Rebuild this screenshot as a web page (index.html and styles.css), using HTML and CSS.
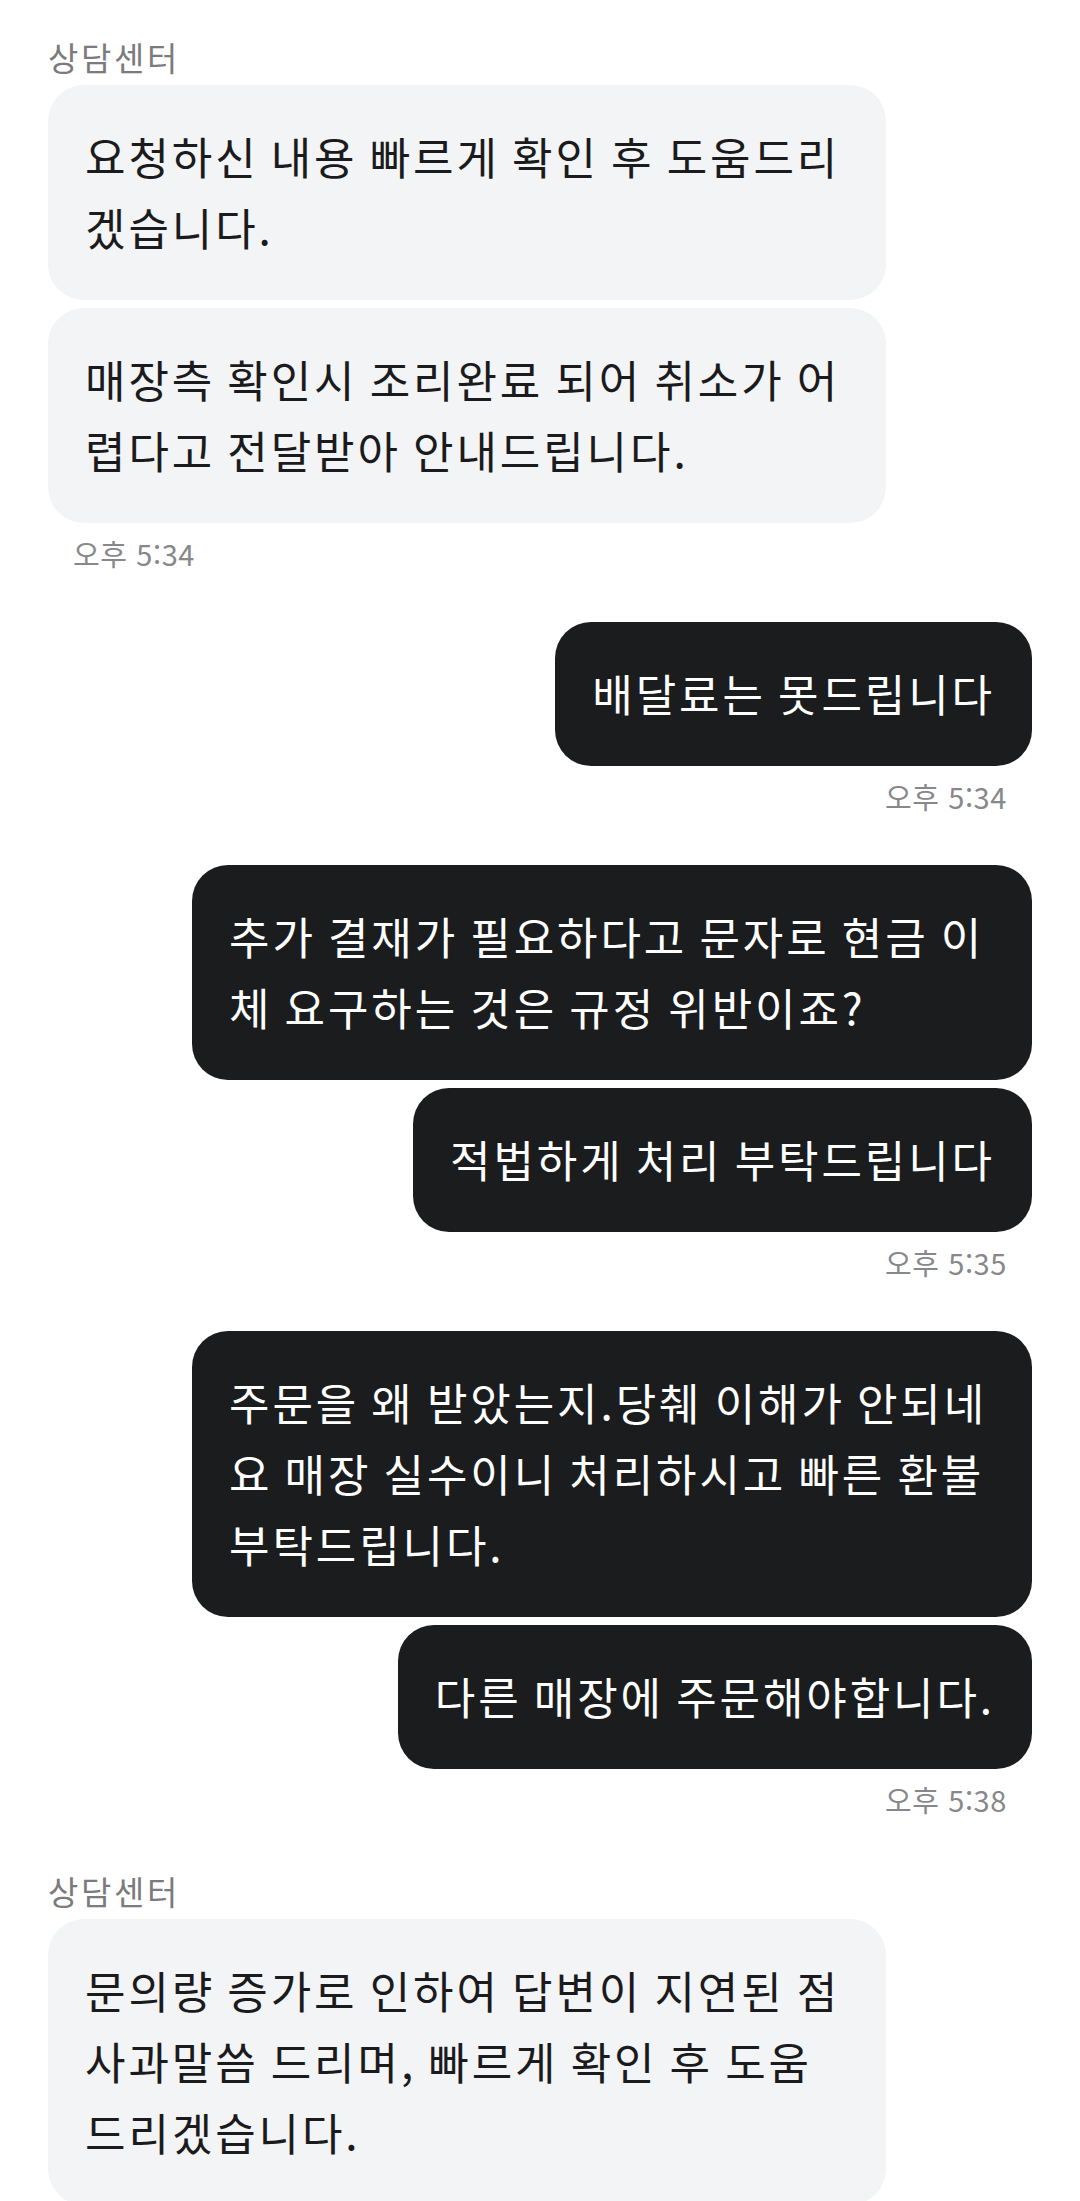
FILE: index.html
```html
<!DOCTYPE html>
<html lang="ko">

<head>
    <title>상담 채팅</title>
    <meta name="viewport" content="width=device-width, initial-scale=1.0">
    <link rel="stylesheet" href="styles.css">
</head>

<body>
    <div class="chat">
        <div class="group">
            <div class="sender">상담센터</div>
            <div class="bubble agent">요청하신 내용 빠르게 확인 후 도움드리겠습니다.</div>
            <div class="bubble agent">매장측 확인시 조리완료 되어 취소가 어렵다고 전달받아 안내드립니다.</div>
            <div class="time">오후 5:34</div>
        </div>

        <div class="group mine">
            <div class="bubble me">배달료는 못드립니다</div>
            <div class="time">오후 5:34</div>
        </div>

        <div class="group mine">
            <div class="bubble me">추가 결재가 필요하다고 문자로 현금 이체 요구하는 것은 규정 위반이죠?</div>
            <div class="bubble me">적법하게 처리 부탁드립니다</div>
            <div class="time">오후 5:35</div>
        </div>

        <div class="group mine">
            <div class="bubble me">주문을 왜 받았는지.당췌 이해가 안되네요 매장 실수이니 처리하시고 빠른 환불 부탁드립니다.</div>
            <div class="bubble me">다른 매장에 주문해야합니다.</div>
            <div class="time">오후 5:38</div>
        </div>

        <div class="group">
            <div class="sender">상담센터</div>
            <div class="bubble agent">문의량 증가로 인하여 답변이 지연된 점 사과말씀 드리며, 빠르게 확인 후 도움드리겠습니다.</div>
        </div>
    </div>
</body>

</html>
```

FILE: styles.css
```css
body {
    margin: 0;
    padding: 0;
    background-color: #fff;
    font-family: "Noto Sans CJK KR", "Noto Sans", sans-serif;
    color: #1b1b1d;
}

.chat {
    padding: 37px 48px 0 48px;
    display: flex;
    flex-direction: column;
    gap: 51px;
}

.group {
    display: flex;
    flex-direction: column;
    align-items: flex-start;
    gap: 8px;
}

.group.mine {
    align-items: flex-end;
}

/* extra room above the second agent label */
.group + .group:not(.mine) {
    margin-top: 3px;
}

.sender {
    font-size: 33px;
    line-height: 40px;
    letter-spacing: 2.6px;
    color: #7b7b7d;
}

.bubble {
    font-size: 44px;
    line-height: 71px;
    letter-spacing: 2.9px;
    word-spacing: -3px;
    padding: 36px 37px 37px 37px;
    border-radius: 36px;
    box-sizing: border-box;
}

.bubble.agent {
    max-width: 838px;
    padding-right: 43px;
    background-color: #f3f4f6;
    color: #1b1b1d;
}

.bubble.me {
    max-width: 840px;
    background-color: #1b1c1e;
    color: #fff;
}

.time {
    font-size: 29px;
    line-height: 36px;
    letter-spacing: 0.6px;
    color: #88888a;
    margin-top: 4px;
    padding: 0 25px;
}
```
